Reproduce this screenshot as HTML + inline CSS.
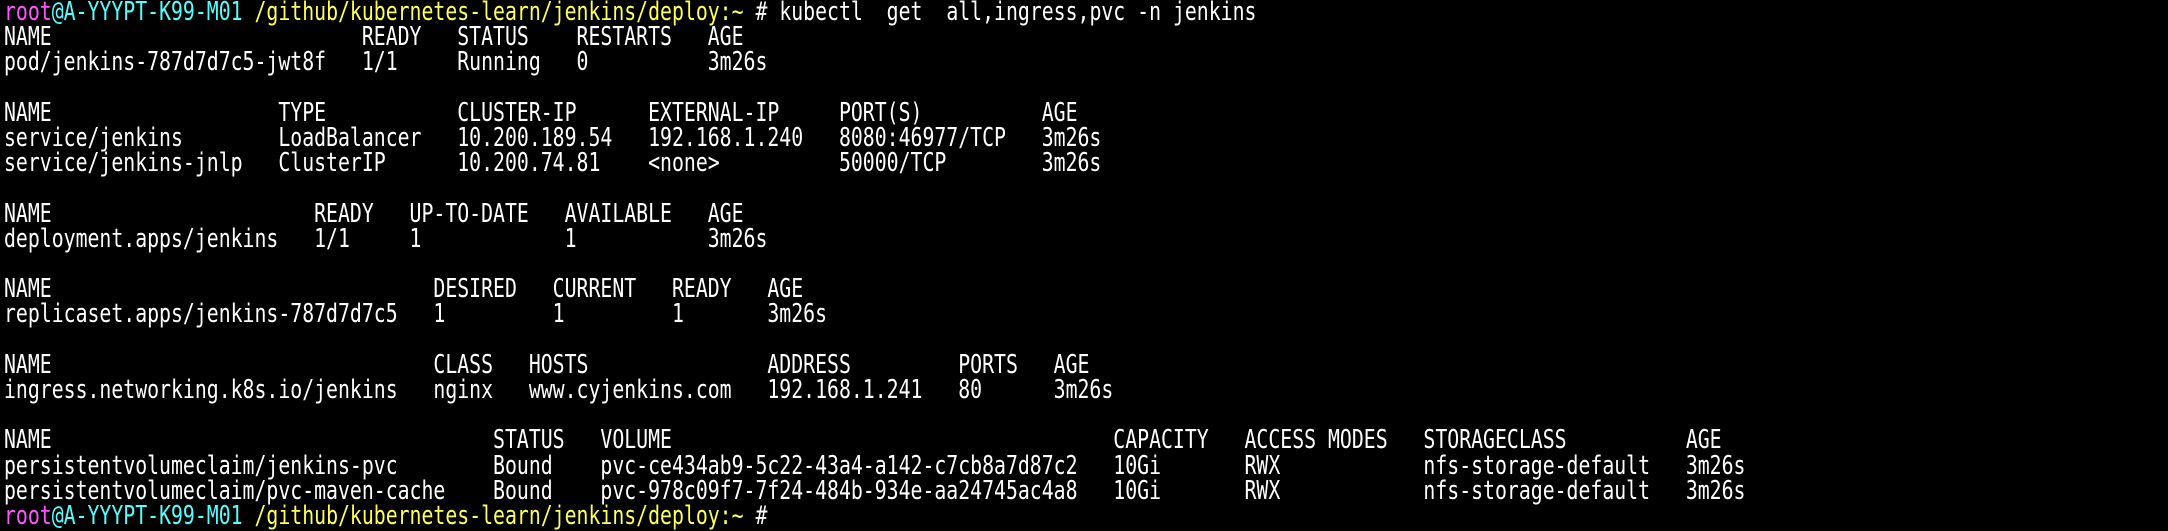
<!DOCTYPE html>
<html><head><meta charset="utf-8"><style>
html,body{margin:0;padding:0;background:#000;width:2168px;height:508px;overflow:hidden}
pre{margin:0;position:absolute;left:4px;top:0;font-family:"DejaVu Sans Mono","Liberation Mono",monospace;font-size:26px;line-height:25.2px;color:#fff;transform:scaleX(0.762);transform-origin:0 0;white-space:pre}
.m{color:#ff55ff}.c{color:#55ffff}.y{color:#ffff55}
</style></head><body><pre><span class="m">root</span><span class="c">@A-YYYPT-K99-M01</span> <span class="y">/github/kubernetes-learn/jenkins/deploy:~</span> # kubectl  get  all,ingress,pvc -n jenkins
NAME                          READY   STATUS    RESTARTS   AGE
pod/jenkins-787d7d7c5-jwt8f   1/1     Running   0          3m26s

NAME                   TYPE           CLUSTER-IP      EXTERNAL-IP     PORT(S)          AGE
service/jenkins        LoadBalancer   10.200.189.54   192.168.1.240   8080:46977/TCP   3m26s
service/jenkins-jnlp   ClusterIP      10.200.74.81    &lt;none&gt;          50000/TCP        3m26s

NAME                      READY   UP-TO-DATE   AVAILABLE   AGE
deployment.apps/jenkins   1/1     1            1           3m26s

NAME                                DESIRED   CURRENT   READY   AGE
replicaset.apps/jenkins-787d7d7c5   1         1         1       3m26s

NAME                                CLASS   HOSTS               ADDRESS         PORTS   AGE
ingress.networking.k8s.io/jenkins   nginx   www.cyjenkins.com   192.168.1.241   80      3m26s

NAME                                     STATUS   VOLUME                                     CAPACITY   ACCESS MODES   STORAGECLASS          AGE
persistentvolumeclaim/jenkins-pvc        Bound    pvc-ce434ab9-5c22-43a4-a142-c7cb8a7d87c2   10Gi       RWX            nfs-storage-default   3m26s
persistentvolumeclaim/pvc-maven-cache    Bound    pvc-978c09f7-7f24-484b-934e-aa24745ac4a8   10Gi       RWX            nfs-storage-default   3m26s
<span class="m">root</span><span class="c">@A-YYYPT-K99-M01</span> <span class="y">/github/kubernetes-learn/jenkins/deploy:~</span> # </pre></body></html>
